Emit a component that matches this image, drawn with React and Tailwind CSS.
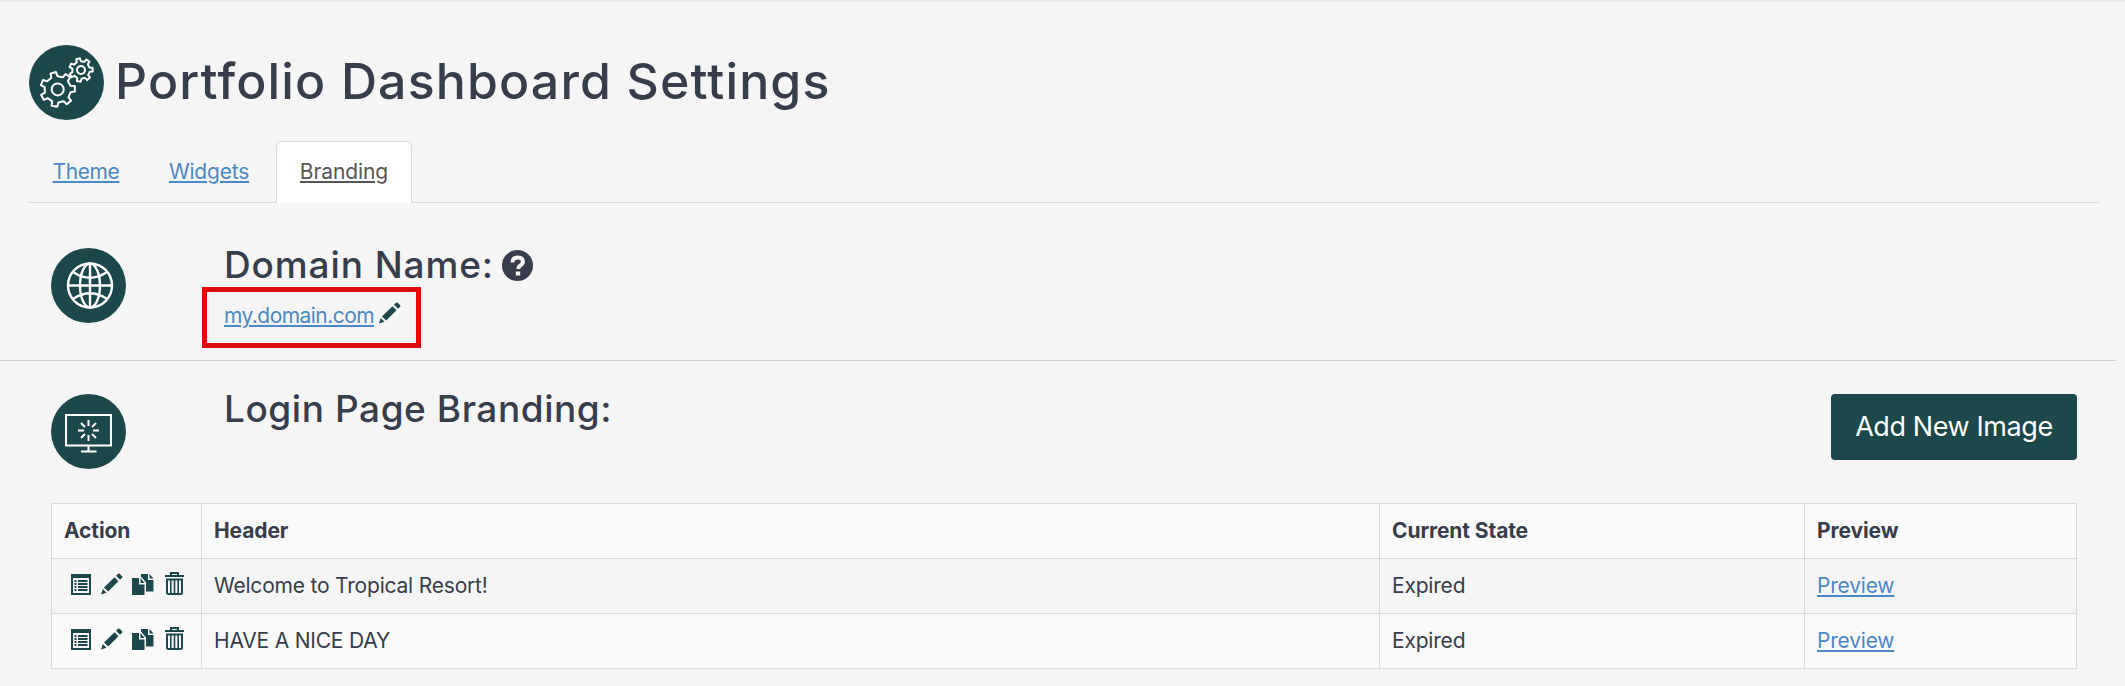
const Circle = ({ children }) => (
  <svg viewBox="0 0 75 75" className="h-[75px] w-[75px] shrink-0" fill="none" stroke="#fff">
    <circle cx="37.5" cy="37.5" r="37.5" fill="#1c484b" stroke="none" />
    {children}
  </svg>
);

// Outline of a cog with the given number of teeth
const gearPath = (cx, cy, outer, inner, teeth, turn) => {
  const step = (Math.PI * 2) / teeth;
  const points = [];
  for (let i = 0; i < teeth; i++) {
    const a = turn + i * step;
    [
      [-0.27, inner],
      [-0.18, outer],
      [0.18, outer],
      [0.27, inner],
    ].forEach(([k, r]) => {
      const x = cx + r * Math.cos(a + k * step);
      const y = cy + r * Math.sin(a + k * step);
      points.push(x.toFixed(2) + " " + y.toFixed(2));
    });
  }
  return "M" + points.join("L") + "Z";
};

const GearsIcon = () => (
  <Circle>
    <g strokeWidth="2" strokeLinejoin="round">
      <path d={gearPath(28.7, 44.4, 17.4, 13.2, 7, -1.83)} />
      <circle cx="28.7" cy="44.4" r="6" />
      <path d={gearPath(52, 25, 11.8, 8.8, 7, -1.83)} />
      <circle cx="52" cy="25" r="4" />
    </g>
  </Circle>
);

const GlobeIcon = () => (
  <Circle>
    <g strokeWidth="2.4">
      <circle cx="39" cy="37.5" r="22" />
      <ellipse cx="39" cy="37.5" rx="10" ry="22" />
      <path d="M39 15v45M16.5 37.5h45M22 24q17 11.5 34 0M22 51q17-11.5 34 0" />
    </g>
  </Circle>
);

const MonitorIcon = () => (
  <Circle>
    <path strokeWidth="2" d="M15 21h45v30.5H15zM37.5 51.5v6M30 57.5h15.5" />
    <path
      strokeWidth="2"
      d="M37.5 26v6M37.5 41v6M27 36.5h6M42 36.5h6M30 29l4 4M45 29l-4 4M30 44l4-4M45 44l-4-4"
    />
  </Circle>
);

const PencilIcon = ({ className }) => (
  <svg viewBox="0 0 22 22" className={className} fill="#1c484b">
    <path d="M0 21.500l1.800-5.500 3.700 3.700zM3 14.500L13.500 4.200l4 4L7.200 18.500zM15 2.800L17 .8q.8-.8 1.700 0l2.400 2.400q.8.800 0 1.600L19 6.800z" />
  </svg>
);

const ListIcon = () => (
  <svg viewBox="0 0 20 21" className="h-[21px] w-5" fill="#1c484b">
    <path
      fillRule="evenodd"
      d="M0 0h20v21H0zM2 4v15h16V4zM3.500 6h2v2h-2zM7 6h9.500v2H7zM3.500 9h2v2h-2zM7 9h9.500v2H7zM3.500 12h2v2h-2zM7 12h9.500v2H7zM3.500 15h2v2h-2zM7 15h9.500v2H7z"
    />
  </svg>
);

const CopyIcon = () => (
  <svg viewBox="0 0 22 21" className="ml-[9px] h-[21px] w-[22px]" fill="#1c484b">
    <path d="M0 4h7v6.500h5.500V21H0zM8.500 4l4 5h-4zM9 0h7v6h5.500v11.500H14V8.500L9 2.500zM17.500 0l4 4.500h-4z" />
  </svg>
);

const TrashIcon = () => (
  <svg viewBox="0 0 19 23" className="ml-[11px] h-[23px] w-[19px]" fill="none" stroke="#1c484b">
    <path strokeWidth="2" d="M0 4h19M6 4V1h7v3M2 7v13.500q0 1.500 1.500 1.500h12q1.500 0 1.500-1.500V7M1 7.500h17" />
    <path strokeWidth="1.600" d="M5.800 7v14M9.500 7v14M13.200 7v14" />
  </svg>
);

const HelpIcon = () => (
  <svg viewBox="0 0 31 31" className="ml-2 h-[31px] w-[31px]">
    <circle cx="15.500" cy="15.500" r="15.500" fill="#373d4b" />
    <path d="M10.500 12.500q0-5 5.200-5t5.200 4.300q0 2-2.500 3.600-2 1.200-2 3.600" fill="none" stroke="#f5f5f5" strokeWidth="4" />
    <path d="M13.800 21.500h4.400v4h-4.400z" fill="#f5f5f5" />
  </svg>
);

const tabs = [
  { name: "Theme", width: "w-[112px]", tracking: "tracking-[-0.4px]" },
  { name: "Widgets", width: "w-[128px]", tracking: "tracking-[-0.2px]" },
  { name: "Branding", width: "w-[136px]", tracking: "tracking-[-0.1px]", active: true },
];

const rows = [
  { header: "Welcome to Tropical Resort!", state: "Expired" },
  { header: "HAVE A NICE DAY", state: "Expired" },
];

const link = "text-[#4d87c3] underline decoration-2 underline-offset-[2px]";
const cell = "border border-[#dadada] pl-3 text-left";

const App = () => {
  return (
    <div className="h-[686px] w-[2125px] overflow-hidden border-t-2 border-[#ebebeb] bg-[#f5f5f5] font-['Inter',sans-serif] text-[21px] leading-[30px] text-[#373d4b]">
      <header className="flex h-[139px] pl-[29px] pt-[43px]">
        <GearsIcon />
        <h1 className="ml-[11px] mt-[6px] whitespace-nowrap text-[50px] font-medium leading-[60px] tracking-[1.15px]">
          Portfolio Dashboard Settings
        </h1>
      </header>

      <nav className="ml-7 flex h-[62px] w-[2071px] gap-[3px] border-b border-[#dadada] pl-[2px]">
        {tabs.map((tab) => (
          <a
            key={tab.name}
            href="#"
            className={
              tab.active
                ? `-mb-px h-[62px] rounded-t-md border border-b-0 border-[#dadada] bg-white pt-[15px] text-center text-[#555] underline decoration-2 underline-offset-[2px] ${tab.width} ${tab.tracking}`
                : `pt-4 text-center ${link} ${tab.width} ${tab.tracking}`
            }
          >
            {tab.name}
          </a>
        ))}
      </nav>

      {/* Domain name */}
      <section className="flex h-[158px] w-[2116px] border-b border-[#cfd1d1] pl-[51px] pt-[45px]">
        <GlobeIcon />
        <div className="ml-[76px]">
          <div className="ml-[22px] flex h-[39px]">
            <h2 className="-mt-[2px] whitespace-nowrap text-[37px] font-medium leading-[38px] tracking-[0.9px]">
              Domain Name:
            </h2>
            <div className="mt-[2px]">
              <HelpIcon />
            </div>
          </div>
          <div className="flex h-[61px] w-[219px] border-5 border-[#dc0c0c] pl-[17px] pt-[9px]">
            <a href="#" className={`leading-[30px] tracking-[-0.55px] ${link}`}>
              my.domain.com
            </a>
            <PencilIcon className="ml-[5px] mt-px h-[22px] w-[22px]" />
          </div>
        </div>
      </section>

      {/* Login page images */}
      <section className="flex pl-[51px] pt-[33px]">
        <MonitorIcon />
        <h2 className="-mt-px ml-[98px] whitespace-nowrap text-[37px] font-medium leading-[32px] tracking-[0.55px]">
          Login Page Branding:
        </h2>
        <button className="ml-auto mr-12 h-[66px] w-[246px] rounded bg-[#1c484b] text-[27px] tracking-[-0.4px] text-white">
          Add New Image
        </button>
      </section>

      <table className="ml-[51px] mt-[34px] w-[2026px] table-fixed border-collapse tracking-[-0.2px]">
        <colgroup>
          <col className="w-[150px]" />
          <col className="w-[1178px]" />
          <col className="w-[425px]" />
          <col />
        </colgroup>
        <thead>
          <tr className="h-[55px] bg-[#f9f9f9] tracking-[-0.1px]">
            <th className={cell}>Action</th>
            <th className={cell}>Header</th>
            <th className={cell}>Current State</th>
            <th className={cell}>Preview</th>
          </tr>
        </thead>
        <tbody>
          {rows.map((row) => (
            <tr key={row.header} className="h-[55px] even:bg-[#f9f9f9]">
              <td className={cell}>
                <div className="mb-[6px] ml-[7px] flex items-end">
                  <ListIcon />
                  <PencilIcon className="ml-[10px] h-[22px] w-[22px]" />
                  <CopyIcon />
                  <TrashIcon />
                </div>
              </td>
              <td className={cell}>{row.header}</td>
              <td className={cell}>{row.state}</td>
              <td className={cell}>
                <a href="#" className={link}>
                  Preview
                </a>
              </td>
            </tr>
          ))}
        </tbody>
      </table>
    </div>
  );
};

export default App;
